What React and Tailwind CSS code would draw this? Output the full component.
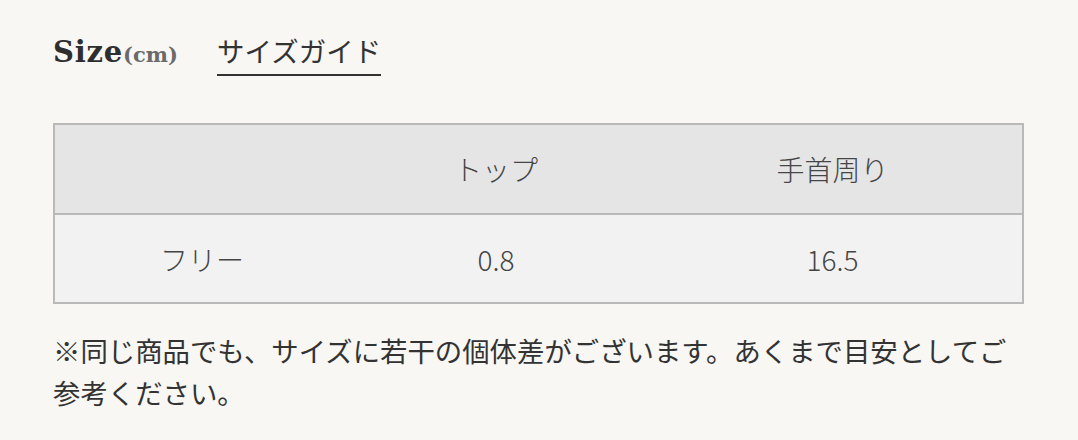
const SIZES = [{ name: "フリー", top: "0.8", wrist: "16.5" }];

const jp = { fontFamily: '"Noto Sans CJK JP", "Noto Sans", sans-serif' };

export default function App() {
  return (
    <div className="w-[1078px] h-[440px] bg-[#f8f7f4] text-[#333]" style={jp}>
      <div className="w-[971px] ml-[53px] pt-[28px]">
        {/* heading */}
        <div className="flex items-end h-[48px]">
          <h2
            className="flex items-baseline text-[#2e2e2e] pb-[9px]"
            style={{ fontFamily: '"DejaVu Serif", "Liberation Serif", serif' }}
          >
            <span className="text-[29px] font-bold leading-none tracking-[0.8px]">Size</span>
            <span className="text-[21px] font-bold leading-none text-[#6a6a6a]">(cm)</span>
          </h2>
          <a className="ml-[39px] text-[27.5px] leading-[40px] pb-[4px] border-b-2 border-[#333] text-[#333]">
            サイズガイド
          </a>
        </div>

        {/* table */}
        <div className="mt-[47px] border-2 border-[#b9b9b9] font-light text-[28px] text-[#454545]">
          <div className="grid grid-cols-[294px_294px_1fr] h-[88px] items-center bg-[#e5e5e5] text-center">
            <div />
            <div>トップ</div>
            <div>手首周り</div>
          </div>
          {SIZES.map((s) => (
            <div
              key={s.name}
              className="grid grid-cols-[294px_294px_1fr] h-[89px] items-center bg-[#f2f2f2] text-center border-t-2 border-[#b9b9b9]"
            >
              <div>{s.name}</div>
              <div>{s.top}</div>
              <div>{s.wrist}</div>
            </div>
          ))}
        </div>

        <p className="mt-[25px] text-[27.4px] leading-[42px] text-[#333]">
          ※同じ商品でも、サイズに若干の個体差がございます。あくまで目安としてご参考ください。
        </p>
      </div>
    </div>
  );
}
